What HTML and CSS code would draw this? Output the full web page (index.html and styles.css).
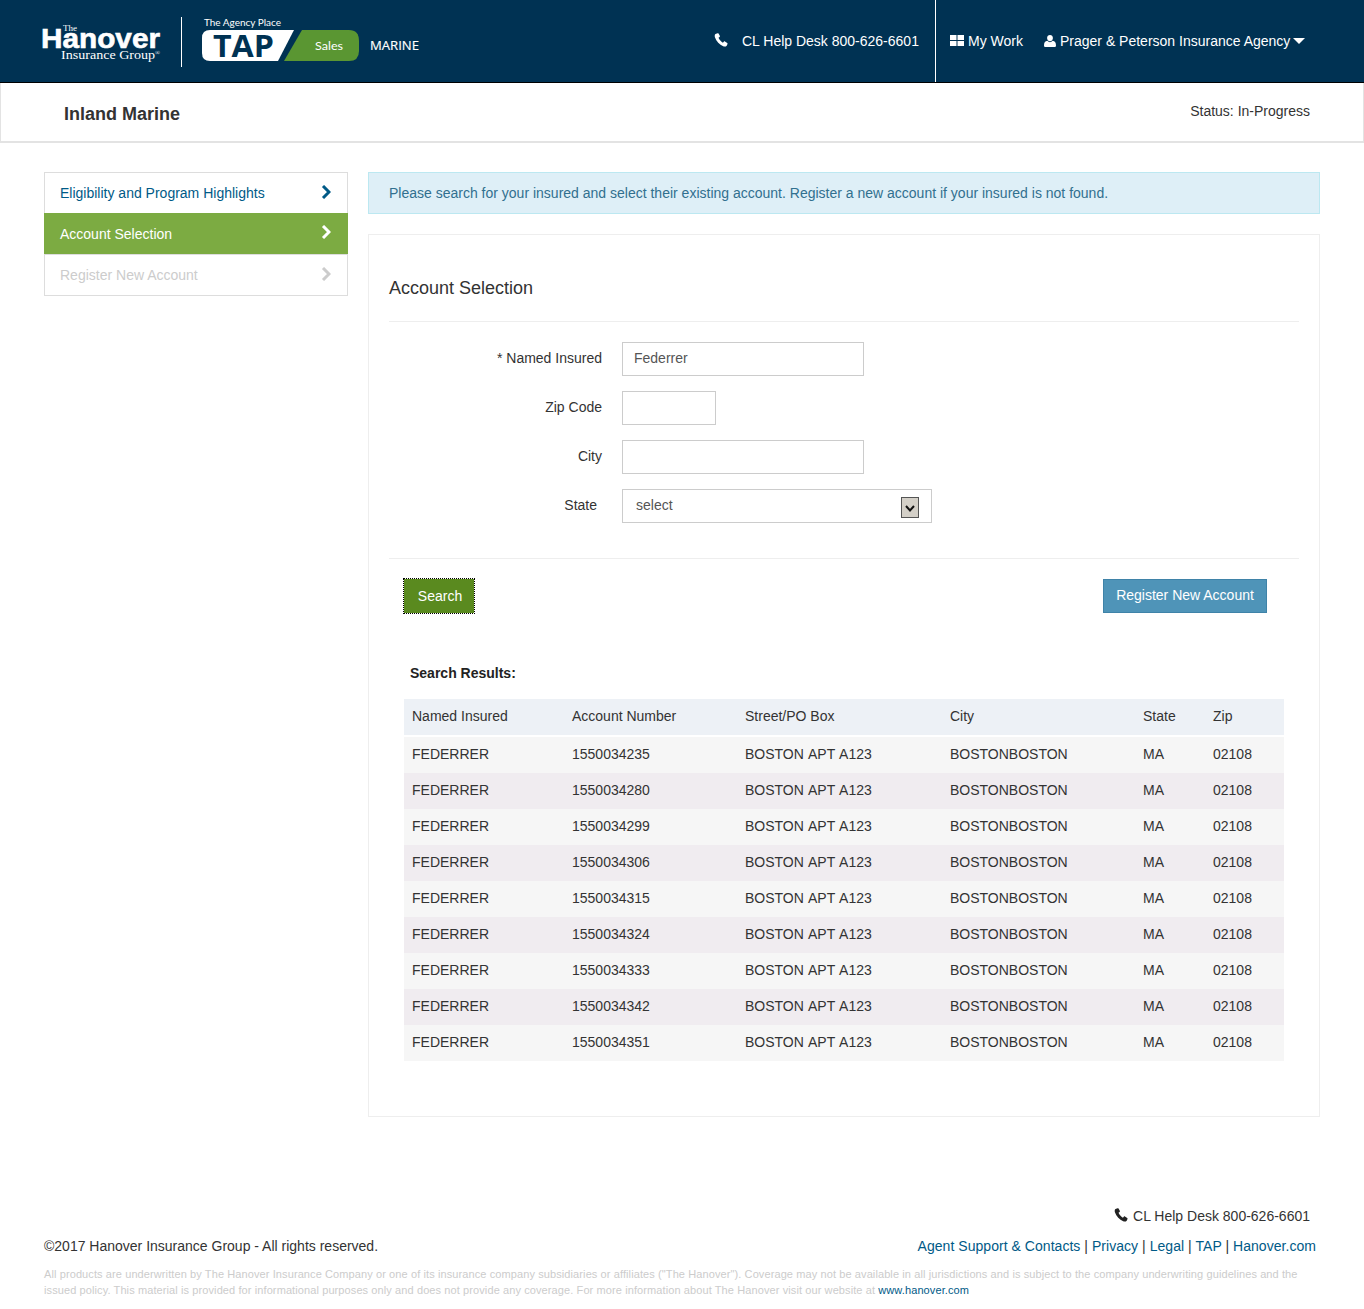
FILE: index.html
```html
<!DOCTYPE html>
<html lang="en">
<head>
    <meta charset="UTF-8">
    <meta name="viewport" content="width=device-width, initial-scale=1.0">
    <title>Inland Marine - Account Selection</title>
    <link rel="stylesheet" href="styles.css">
</head>
<body>
    <header class="topbar">
        <svg class="logos" width="400" height="60" viewBox="0 0 400 60" role="img" aria-label="The Hanover Insurance Group, TAP Sales Marine">
            <text class="logo-the" x="23" y="19" textLength="14" lengthAdjust="spacingAndGlyphs">The</text>
            <text class="logo-hanover" x="1" y="36" textLength="119" lengthAdjust="spacingAndGlyphs">Hanover</text>
            <text class="logo-group" x="21" y="47" textLength="99" lengthAdjust="spacingAndGlyphs">Insurance Group<tspan class="logo-reg" dy="-4">®</tspan></text>
            <rect x="141" y="5" width="1" height="50" fill="#fff"/>
            <text class="logo-place" x="164" y="14" textLength="77" lengthAdjust="spacingAndGlyphs">The Agency Place</text>
            <path d="M170 18H254L238 49H170Q162 49 162 41V26Q162 18 170 18Z" fill="#fff"/>
            <path d="M262 18H309Q319 18 319 29V39Q319 49 309 49H244Z" fill="#5a9632"/>
            <text class="logo-tap" x="173" y="45" textLength="61" lengthAdjust="spacingAndGlyphs">TAP</text>
            <text class="logo-sales" x="275" y="38" textLength="28" lengthAdjust="spacingAndGlyphs">Sales</text>
            <text class="logo-marine" x="330" y="38" textLength="49" lengthAdjust="spacingAndGlyphs">MARINE</text>
        </svg>
        <div class="topbar-help">
            <svg class="icon phone-icon" viewBox="0 0 14 14"><path d="M3.6 .3 1.5 1C.6 1.6.5 3 1 4.600 2.300 8.300 5.600 11.800 9.200 13.300 10.600 13.900 12 13.600 12.700 12.700L13.500 11.100C13.700 10.700 13.600 10.300 13.200 10L10.900 8.500C10.500 8.300 10.100 8.300 9.800 8.700L8.900 9.800C7 8.600 5.400 6.700 4.500 4.800L5.600 3.900C6 3.600 6 3.100 5.800 2.700L4.500 .6C4.300 .3 3.900 .2 3.600 .3Z"/></svg>
            <span class="help-text">CL Help Desk 800-626-6601</span>
        </div>
        <nav class="topbar-nav">
            <a class="nav-link work-link" href="#">
                <svg class="icon grid-icon" viewBox="0 0 14 11"><path d="M0 0H6.500V5H0ZM7.500 0H14V5H7.500ZM0 6H6.500V11H0ZM7.500 6H14V11H7.500Z"/></svg>
                My Work
            </a>
            <a class="nav-link agency-link" href="#">
                <svg class="icon user-icon" viewBox="0 0 12 12"><path d="M6 0C7.700 0 8.900 1.300 8.900 3.100 8.900 4.700 7.800 6.300 6 6.300 4.200 6.300 3.100 4.700 3.100 3.100 3.100 1.300 4.300 0 6 0ZM3.400 5.800C4.100 6.700 5 7.200 6 7.200 7 7.200 7.900 6.700 8.600 5.800 10.800 6.100 12 7.600 12 10.400 12 11.400 11.300 12 10.400 12H1.600C.7 12 0 11.400 0 10.400 0 7.600 1.200 6.100 3.400 5.800Z"/></svg>
                Prager &amp; Peterson Insurance Agency
                <span class="caret"></span>
            </a>
        </nav>
    </header>

    <div class="subheader">
        <h1>Inland Marine</h1>
        <div class="status">Status: In-Progress</div>
    </div>

    <div class="page">
        <aside class="side-nav">
            <a class="side-item" href="#">Eligibility and Program Highlights
                <svg class="chevron" viewBox="0 0 10 14"><path d="M2 1 8 7 2 13" /></svg>
            </a>
            <a class="side-item active" href="#">Account Selection
                <svg class="chevron" viewBox="0 0 10 14"><path d="M2 1 8 7 2 13" /></svg>
            </a>
            <a class="side-item disabled" href="#">Register New Account
                <svg class="chevron" viewBox="0 0 10 14"><path d="M2 1 8 7 2 13" /></svg>
            </a>
        </aside>

        <main class="content">
            <div class="alert">Please search for your insured and select their existing account. Register a new account if your insured is not found.</div>

            <section class="panel">
                <h2>Account Selection</h2>

                <form class="search-form">
                    <div class="form-group">
                        <label for="insured">* Named Insured</label>
                        <input class="field wide" type="text" id="insured" value="Federrer">
                    </div>
                    <div class="form-group">
                        <label for="zip">Zip Code</label>
                        <input class="field short" type="text" id="zip">
                    </div>
                    <div class="form-group">
                        <label for="city">City</label>
                        <input class="field wide" type="text" id="city">
                    </div>
                    <div class="form-group">
                        <label class="state-label" for="state">State</label>
                        <div class="select-wrap">
                            <select class="field select" id="state">
                                <option>select</option>
                            </select>
                            <span class="select-arrow">
                                <svg viewBox="0 0 16 16" width="16" height="16"><path d="M4 6 8 10.500 12 6" /></svg>
                            </span>
                        </div>
                    </div>

                    <div class="form-actions">
                        <button class="btn btn-search" type="button">Search</button>
                        <button class="btn btn-register" type="button">Register New Account</button>
                    </div>
                </form>

                <div class="results">
                    <h3>Search Results:</h3>
                    <table>
                        <thead>
                            <tr>
                                <th class="col-name">Named Insured</th>
                                <th class="col-account">Account Number</th>
                                <th class="col-street">Street/PO Box</th>
                                <th class="col-city">City</th>
                                <th class="col-state">State</th>
                                <th>Zip</th>
                            </tr>
                        </thead>
                        <tbody>
                            <tr><td>FEDERRER</td><td>1550034235</td><td>BOSTON APT A123</td><td>BOSTONBOSTON</td><td>MA</td><td>02108</td></tr>
                            <tr><td>FEDERRER</td><td>1550034280</td><td>BOSTON APT A123</td><td>BOSTONBOSTON</td><td>MA</td><td>02108</td></tr>
                            <tr><td>FEDERRER</td><td>1550034299</td><td>BOSTON APT A123</td><td>BOSTONBOSTON</td><td>MA</td><td>02108</td></tr>
                            <tr><td>FEDERRER</td><td>1550034306</td><td>BOSTON APT A123</td><td>BOSTONBOSTON</td><td>MA</td><td>02108</td></tr>
                            <tr><td>FEDERRER</td><td>1550034315</td><td>BOSTON APT A123</td><td>BOSTONBOSTON</td><td>MA</td><td>02108</td></tr>
                            <tr><td>FEDERRER</td><td>1550034324</td><td>BOSTON APT A123</td><td>BOSTONBOSTON</td><td>MA</td><td>02108</td></tr>
                            <tr><td>FEDERRER</td><td>1550034333</td><td>BOSTON APT A123</td><td>BOSTONBOSTON</td><td>MA</td><td>02108</td></tr>
                            <tr><td>FEDERRER</td><td>1550034342</td><td>BOSTON APT A123</td><td>BOSTONBOSTON</td><td>MA</td><td>02108</td></tr>
                            <tr><td>FEDERRER</td><td>1550034351</td><td>BOSTON APT A123</td><td>BOSTONBOSTON</td><td>MA</td><td>02108</td></tr>
                        </tbody>
                    </table>
                </div>
            </section>
        </main>
    </div>

    <footer class="footer">
        <div class="footer-help">
            <svg class="icon phone-icon dark" viewBox="0 0 14 14"><path d="M3.6 .3 1.5 1C.6 1.6.5 3 1 4.600 2.300 8.300 5.600 11.800 9.200 13.300 10.600 13.900 12 13.600 12.700 12.700L13.500 11.100C13.700 10.700 13.600 10.300 13.200 10L10.900 8.500C10.500 8.300 10.100 8.300 9.800 8.700L8.900 9.800C7 8.600 5.400 6.700 4.500 4.800L5.600 3.900C6 3.600 6 3.100 5.800 2.700L4.500 .6C4.300 .3 3.900 .2 3.600 .3Z"/></svg>
            CL Help Desk 800-626-6601
        </div>
        <div class="footer-row">
            <div class="copyright">©2017 Hanover Insurance Group - All rights reserved.</div>
            <div class="footer-links">
                <a href="#">Agent Support &amp; Contacts</a> | <a href="#">Privacy</a> | <a href="#">Legal</a> | <a href="#">TAP</a> | <a href="#">Hanover.com</a>
            </div>
        </div>
        <p class="fine-print">All products are underwritten by The Hanover Insurance Company or one of its insurance company subsidiaries or affiliates ("The Hanover"). Coverage may not be available in all jurisdictions and is subject to the company underwriting guidelines and the issued policy. This material is provided for informational purposes only and does not provide any coverage. For more information about The Hanover visit our website at <a href="#">www.hanover.com</a></p>
    </footer>
</body>
</html>
```

FILE: styles.css
```css
* {
    box-sizing: border-box;
}
body {
    margin: 0;
    font-family: "Liberation Sans", Arial, sans-serif;
    font-size: 14px;
    color: #333;
    background: #fff;
}
a {
    text-decoration: none;
}
.icon {
    fill: currentColor;
    flex: none;
}

/* top bar */
.topbar {
    display: flex;
    height: 83px;
    padding-left: 40px;
    background: #003253;
    border-bottom: 1px solid #000;
    color: #fff;
}
.logos {
    margin-top: 12px;
    flex: none;
}
.logos text {
    fill: #fff;
}
.logo-the {
    font-family: "Liberation Serif", serif;
    font-size: 9px;
}
.logos .logo-hanover {
    font-weight: bold;
    font-size: 27px;
    stroke: #fff;
    stroke-width: .6;
}
.logo-group {
    font-family: "Liberation Serif", serif;
    font-size: 13px;
}
.logo-reg {
    font-size: 6px;
}
.logo-place {
    font-family: Lato, sans-serif;
    font-size: 10px;
}
.logos .logo-tap {
    font-family: "Open Sans", sans-serif;
    font-weight: bold;
    font-size: 31px;
    fill: #003253;
}
.logo-sales {
    font-family: Lato, sans-serif;
    font-size: 12px;
}
.logos .logo-marine {
    font-family: "Open Sans", sans-serif;
    font-weight: 500;
    font-size: 12px;
    stroke: #fff;
    stroke-width: .15;
}
.topbar-help {
    display: flex;
    align-items: center;
    margin-left: 274px;
    height: 82px;
    padding-bottom: 1px;
    width: 222px;
    border-right: 1px solid #fff;
}
.phone-icon {
    width: 14px;
    height: 14px;
    margin-bottom: 2px;
}
.help-text {
    margin-left: 14px;
}
.topbar-nav {
    display: flex;
    align-items: center;
    height: 82px;
    padding-bottom: 1px;
    padding-left: 14px;
}
.nav-link {
    display: flex;
    align-items: center;
    color: #fff;
}
.grid-icon {
    width: 14px;
    height: 11px;
    margin-right: 4px;
}
.user-icon {
    width: 12px;
    height: 12px;
    margin-right: 4px;
}
.agency-link {
    margin-left: 21px;
}
.caret {
    margin-left: 3px;
    border-top: 6px solid #fff;
    border-left: 6px solid transparent;
    border-right: 6px solid transparent;
}

/* sub header */
.subheader {
    display: flex;
    justify-content: space-between;
    height: 60px;
    padding: 0 53px 0 63px;
    border-left: 1px solid #e3e3e3;
    border-right: 1px solid #e3e3e3;
    border-bottom: 2px solid #e3e3e3;
}
.subheader h1 {
    margin: 20px 0 0;
    font-size: 18px;
    line-height: 22px;
}
.status {
    margin-top: 19px;
    line-height: 18px;
}

/* page columns */
.page {
    display: flex;
    gap: 20px;
    padding: 29px 44px 0;
}
.side-nav {
    width: 304px;
    height: 124px;
    border: 1px solid #ddd;
}
.side-item {
    display: flex;
    justify-content: space-between;
    align-items: center;
    height: 41px;
    padding: 0 16px 0 15px;
    color: #005a87;
}
.side-item:first-child {
    height: 40px;
}
.side-item.active {
    margin: 0 -1px;
    padding: 0 17px 0 16px;
    background: #7cab42;
    color: #fff;
}
.side-item.disabled {
    color: #ccc;
    border-top: 1px solid #ddd;
}
.chevron {
    width: 10px;
    height: 14px;
    margin-bottom: 3px;
    fill: none;
    stroke: currentColor;
    stroke-width: 3;
}
.content {
    width: 952px;
}
.alert {
    height: 42px;
    padding: 0 20px;
    line-height: 41px;
    background: #deeff7;
    border: 1px solid #bce8f1;
    color: #31708f;
}
.panel {
    height: 883px;
    margin-top: 20px;
    padding: 0 20px;
    border: 1px solid #eee;
}
.panel h2 {
    margin: 0;
    height: 87px;
    padding-top: 42px;
    font-size: 18px;
    font-weight: normal;
    line-height: 22px;
    border-bottom: 1px solid #eee;
}

/* search form */
.search-form {
    padding-top: 20px;
}
.form-group {
    display: flex;
    align-items: center;
    height: 34px;
    margin-bottom: 15px;
}
.form-group label {
    width: 233px;
    padding-right: 20px;
    padding-bottom: 2px;
    text-align: right;
}
.form-group .state-label {
    padding-right: 25px;
}
.field {
    height: 34px;
    padding: 0 11px 2px;
    border: 1px solid #ccc;
    font-family: inherit;
    font-size: 14px;
    color: #555;
    background: #fff;
    border-radius: 0;
}
.wide {
    width: 242px;
}
.short {
    width: 94px;
}
.select-wrap {
    position: relative;
    width: 310px;
}
.select {
    width: 100%;
    padding-left: 13px;
    appearance: none;
}
.select-arrow {
    position: absolute;
    top: 8px;
    right: 13px;
    width: 18px;
    height: 21px;
    display: flex;
    align-items: center;
    justify-content: center;
    background: #d4d0c8;
    border: 1px solid #555;
    pointer-events: none;
}
.select-arrow path {
    fill: none;
    stroke: #111;
    stroke-width: 2;
}
.form-actions {
    display: flex;
    justify-content: space-between;
    align-items: center;
    height: 106px;
    margin-top: 35px;
    padding: 1px 32px 0 14px;
    border-top: 1px solid #eee;
}
.btn {
    border: none;
    border-radius: 0;
    font-family: inherit;
    font-size: 14px;
    color: #fff;
}
.btn-search {
    width: 72px;
    height: 36px;
    margin-bottom: 32px;
    padding: 0 0 0 2px;
    background: #5a8a1f;
    background-clip: padding-box;
    border: 1px dotted #000;
}
.btn-register {
    width: 164px;
    height: 34px;
    margin-bottom: 32px;
    padding: 0 0 2px;
    background: #4f94b8;
    border: 1px solid #3f83a8;
}

/* results */
.results {
    padding: 0 15px;
}
.results h3 {
    margin: 0 0 17px 6px;
    font-size: 14px;
    line-height: 18px;
    color: #222;
}
table {
    width: 880px;
    border-collapse: separate;
    border-spacing: 0;
    table-layout: fixed;
}
th {
    height: 38px;
    padding: 0 8px 2px;
    font-weight: normal;
    text-align: left;
    background: #edf1f6;
    background-clip: padding-box;
    border-bottom: 2px solid #fff;
}
td {
    height: 36px;
    padding: 0 8px 2px;
    color: #333;
}
td:nth-child(3) {
    word-spacing: 1px;
}
tbody tr:nth-child(odd) {
    background: #f6f6f6;
}
tbody tr:nth-child(even) {
    background: #f0ecf0;
}
.col-name {
    width: 160px;
}
.col-account {
    width: 173px;
}
.col-street {
    width: 205px;
}
.col-city {
    width: 193px;
}
.col-state {
    width: 70px;
}

/* footer */
.footer {
    padding: 90px 44px 0;
}
.footer-help {
    display: flex;
    justify-content: flex-end;
    align-items: center;
    gap: 5px;
    padding-right: 10px;
    line-height: 18px;
}
.phone-icon.dark {
    color: #222;
}
.footer-row {
    display: flex;
    justify-content: space-between;
    margin-top: 12px;
    padding-right: 4px;
    line-height: 18px;
}
.footer-links {
    letter-spacing: .04px;
}
.footer-links a {
    color: #005a87;
}
.fine-print {
    margin: 11px 0 0;
    font-size: 11px;
    letter-spacing: .1px;
    line-height: 16px;
    color: #ccc;
}
.fine-print a {
    color: #005a87;
}
```
